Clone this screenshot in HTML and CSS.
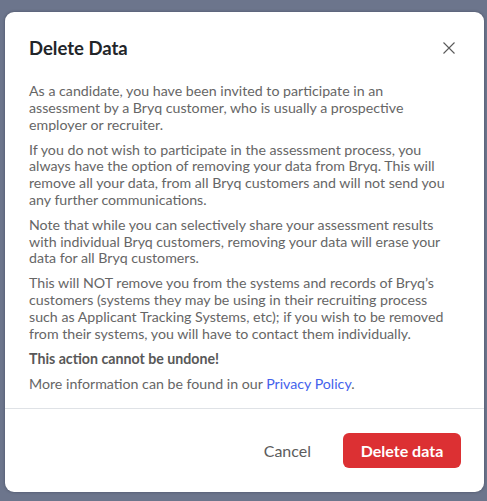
FILE: index.html
```html
<!DOCTYPE html>
<html lang="en">
<head>
<meta charset="utf-8">
<title>Delete Data</title>
<link rel="stylesheet" href="styles.css">
</head>
<body>
<div class="backdrop">
  <div class="modal" role="dialog" aria-labelledby="modal-title">
    <div class="modal-header">
      <h2 class="modal-title" id="modal-title">Delete Data</h2>
      <button class="close" aria-label="Close">
        <svg width="14" height="14" viewBox="0 0 14 14" aria-hidden="true"><path d="M1.5 1.5L12.5 12.5M12.5 1.5L1.5 12.5" stroke="#5a5a5a" stroke-width="1.1" fill="none"/></svg>
      </button>
    </div>
    <div class="modal-body">
      <p>As a candidate, you have been invited to participate in an<br>assessment by a Bryq customer, who is usually a prospective<br>employer or recruiter.</p>
      <p>If you do not wish to participate in the assessment process, you<br>always have the option of removing your data from Bryq. This will<br>remove all your data, from all Bryq customers and will not send you<br>any further communications.</p>
      <p>Note that while you can selectively share your assessment results<br>with individual Bryq customers, removing your data will erase your<br>data for all Bryq customers.</p>
      <p>This will NOT remove you from the systems and records of Bryq’s<br>customers (systems they may be using in their recruiting process<br>such as Applicant Tracking Systems, etc); if you wish to be removed<br>from their systems, you will have to contact them individually.</p>
      <p class="strong">This action cannot be undone!</p>
      <p>More information can be found in our <a href="#">Privacy Policy</a>.</p>
    </div>
    <div class="modal-footer">
      <button class="btn btn-link">Cancel</button>
      <button class="btn btn-danger">Delete data</button>
    </div>
  </div>
</div>
</body>
</html>
```
FILE: styles.css
```css
html, body {
  margin: 0;
  padding: 0;
  height: 100%;
}
body {
  background: #6c758c;
  font-family: Lato, "Noto Sans", sans-serif;
}
.backdrop {
  padding: 12px 3px 9px 5px;
}
.modal {
  width: 479px;
  background: #fff;
  border-radius: 9px;
  box-shadow: 0 0 3px rgba(30, 35, 50, 0.45);
  display: flex;
  flex-direction: column;
}
.modal-header {
  display: flex;
  align-items: center;
  justify-content: space-between;
  padding: 24px 28px 16px 24px;
}
.modal-title {
  margin: 0;
  font-size: 18.5px;
  line-height: 24px;
  font-weight: 700;
  color: #222529;
}
.close {
  border: 0;
  background: none;
  padding: 0;
  width: 14px;
  height: 14px;
  display: flex;
  cursor: pointer;
}
.modal-body {
  padding: 7px 24px 16px 24px;
  color: #666666;
  font-size: 14.2px;
  line-height: 16.75px;
}
.modal-body p {
  margin: 0 0 8.3px;
}
.modal-body p:last-child {
  margin-bottom: 0;
}
.modal-body .strong {
  font-weight: 700;
  color: #585858;
}
.modal-body a {
  color: #4462ec;
  text-decoration: none;
}
.modal-footer {
  border-top: 1px solid #dfe2e6;
  padding: 24px 23px 24px 24px;
  display: flex;
  justify-content: flex-end;
  align-items: center;
  gap: 16px;
}
.btn {
  font-family: inherit;
  font-size: 16px;
  border: 0;
  border-radius: 6px;
  height: 35px;
  padding: 0 16px;
  cursor: pointer;
}
.btn-link {
  background: none;
  color: #5c5c5c;
}
.btn-danger {
  background: #dc3033;
  color: #fff;
  font-weight: 700;
  width: 118px;
  padding: 0;
}
```
